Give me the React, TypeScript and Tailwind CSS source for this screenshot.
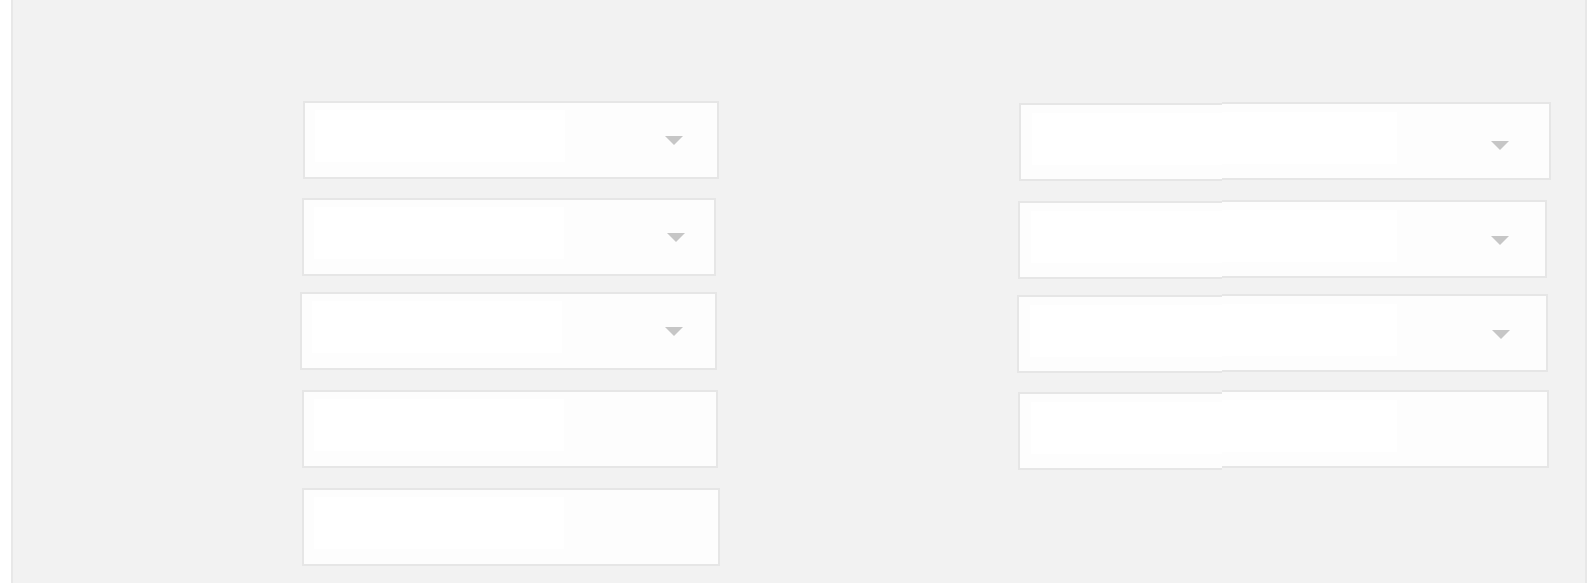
import React from 'react';

function Caret({ className = '' }: { className?: string }) {
  return (
    <svg width="18" height="9" viewBox="0 0 18 9" className={className}>
      <polygon points="0,0 18,0 9,9" fill="#c6c6c6" />
    </svg>
  );
}

// left column boxes: offsets copied from the mockup, they're not perfectly aligned
const leftBoxes = [
  { cls: 'mt-[101px] ml-[3px] w-[416px]', caret: 'pr-[34px]' },
  { cls: 'mt-[19px] ml-[2px] w-[414px]', caret: 'pr-[29px]' },
  { cls: 'mt-[16px] ml-0 w-[417px]', caret: 'pr-[32px]' },
  { cls: 'mt-[20px] ml-[2px] w-[416px]', caret: '' },
  { cls: 'mt-[20px] ml-[2px] w-[418px]', caret: '' },
];

const rightBoxes = [
  { cls: 'mt-[102px] ml-[3px] w-[532px]', leftW: 'w-[203px]', shift: 'mt-[1px]', caret: 'pr-[40px] mt-[9px]' },
  { cls: 'mt-[20px] ml-[2px] w-[529px]', leftW: 'w-[204px]', shift: 'mt-[1px]', caret: 'pr-[36px] mt-[2px]' },
  { cls: 'mt-[16px] ml-[1px] w-[531px]', leftW: 'w-[205px]', shift: 'mt-[1px]', caret: 'pr-[36px] mt-[2px]' },
  { cls: 'mt-[18px] ml-[2px] w-[531px]', leftW: 'w-[204px]', shift: 'mt-[2px]', caret: '' },
];

export default function App() {
  return (
    <div className="h-[583px] w-[1596px] bg-white overflow-hidden">
      <div className="ml-[11px] h-full w-[1576px] bg-[#f2f2f2] border-x-2 border-[#e8e8e8] flex">
        {/* left column */}
        <div className="ml-[287px] w-[420px] flex flex-col">
          {leftBoxes.map((b, i) => (
            <div
              key={i}
              className={`${b.cls} h-[78px] shrink-0 bg-[#fdfdfd] border-2 border-[#e6e6e6] flex items-center relative`}
            >
              <div className="absolute left-[10px] top-[7px] h-[52px] w-[250px] bg-white" />
              {b.caret && (
                <div className={`ml-auto relative ${b.caret}`}>
                  <Caret />
                </div>
              )}
            </div>
          ))}
        </div>

        {/* right column */}
        <div className="ml-[296px] w-[536px] flex flex-col">
          {rightBoxes.map((b, i) => (
            <div key={i} className={`${b.cls} h-[78px] shrink-0 flex items-start`}>
              <div className={`${b.leftW} ${b.shift} h-[78px] shrink-0 bg-[#fdfdfd] border-y-2 border-l-2 border-[#e6e6e6] pl-[11px] pt-[8px]`}>
                <div className="h-[52px] w-full bg-white" />
              </div>
              <div className="flex-1 h-[78px] bg-[#fdfdfd] border-y-2 border-r-2 border-[#e6e6e6] flex items-center relative">
                <div className="absolute left-0 top-[8px] h-[52px] w-[175px] bg-white" />
                {b.caret && (
                  <div className={`ml-auto relative ${b.caret}`}>
                    <Caret />
                  </div>
                )}
              </div>
            </div>
          ))}
        </div>
      </div>
    </div>
  );
}
